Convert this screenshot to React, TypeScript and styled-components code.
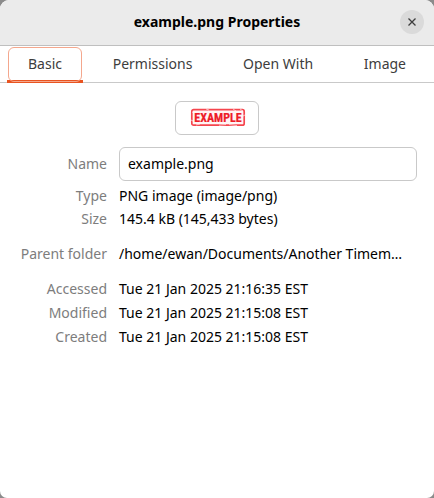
import React, { useState } from 'react';
import styled, { createGlobalStyle } from 'styled-components';

const GlobalStyle = createGlobalStyle`
  * { box-sizing: border-box; }
  body {
    margin: 0;
    background: #8b8b8b;
    font-family: 'Noto Sans', 'Open Sans', sans-serif;
    font-size: 14px;
    line-height: 20px;
    color: #000;
  }
  button, input { font: inherit; color: inherit; }
`;

const Window = styled.main`
  display: flex;
  flex-direction: column;
  min-height: 100vh;
  overflow: hidden;
  background: #fff;
  border-radius: 9px 9px 7px 7px;
`;

const TitleBar = styled.header`
  display: grid;
  grid-template-columns: 24px 1fr 24px;
  align-items: center;
  height: 46px;
  padding: 0 10px;
  padding-bottom: 1px;
  background: #ebebeb;
  border-bottom: 1px solid #bfbfbf;
`;

const Title = styled.h1`
  grid-column: 2;
  margin: 0;
  font-size: 14px;
  font-weight: 700;
  line-height: 20px;
  text-align: center;
`;

const CloseButton = styled.button`
  display: grid;
  place-items: center;
  width: 24px;
  height: 24px;
  padding: 0;
  border: 0;
  border-radius: 50%;
  background: #dadada;
  color: #3d3d3d;
`;

const TabBar = styled.div`
  display: flex;
  justify-content: space-between;
  height: 37px;
  padding: 0 7px;
  border-bottom: 1px solid #c9c9c9;
`;

const Tab = styled.button<{ $active: boolean }>`
  height: 37px;
  padding: 1px 0 0;
  border: 0;
  border-bottom: 3px solid ${(p) => (p.$active ? '#e95420' : 'transparent')};
  background: none;
  color: #3d3d3d;
  outline: none;
`;

const TabLabel = styled.span<{ $active: boolean }>`
  display: block;
  height: 35px;
  margin: 0 1px;
  padding: 6px 19px;
  border: 1px solid ${(p) => (p.$active ? '#f4a78d' : 'transparent')};
  border-radius: 6px;
`;

const Page = styled.section`
  display: flex;
  flex-direction: column;
  gap: 12px;
  padding: 18px 17px;
`;

const PreviewButton = styled.button`
  display: grid;
  place-items: center;
  align-self: center;
  width: 84px;
  height: 34px;
  padding: 0;
  border: 1px solid #c9c9c9;
  border-radius: 6px;
  background: #fff;
`;

const Fields = styled.div`
  display: grid;
  gap: 15px;
`;

const Group = styled.div<{ $gap: number }>`
  display: grid;
  gap: ${(p) => p.$gap}px;
`;

const Row = styled.div`
  display: grid;
  grid-template-columns: 90px minmax(0, 1fr);
  column-gap: 12px;
  align-items: center;
`;

const Label = styled.label`
  color: #7d7d7d;
  text-align: right;
  white-space: nowrap;
`;

const Value = styled.output`
  white-space: nowrap;
`;

const NameInput = styled.input`
  width: 100%;
  height: 34px;
  padding: 0 8px 2px;
  border: 1px solid #c9c9c9;
  border-radius: 6px;
  background: #fff;
  outline: none;
`;

const StampText = styled.text`
  font-family: 'Liberation Sans Narrow', 'Roboto Condensed', 'Roboto', sans-serif;
  font-size: 12px;
  font-weight: 700;
`;

const tabs = ['Basic', 'Permissions', 'Open With', 'Image'];

const groups = [
  { gap: 3, rows: [['Type', 'PNG image (image/png)'], ['Size', '145.4 kB (145,433 bytes)']] },
  { gap: 3, rows: [['Parent folder', '/home/ewan/Documents/Another Timem…']] },
  {
    gap: 4,
    rows: [
      ['Accessed', 'Tue 21 Jan 2025 21:16:35 EST'],
      ['Modified', 'Tue 21 Jan 2025 21:15:08 EST'],
      ['Created', 'Tue 21 Jan 2025 21:15:08 EST'],
    ],
  },
];

function Stamp() {
  return (
    <svg width="58" height="20" viewBox="0 0 58 20" aria-hidden="true">
      <rect x="3.8" y="1.6" width="52.4" height="15.6" rx="1.8" fill="#fff4f4" stroke="#f5454d" strokeWidth="1.7" />
      <StampText x="30" y="13.7" textAnchor="middle" fill="#ee1c27" stroke="#ee1c27" strokeWidth=".2">EXAMPLE</StampText>
      <path
        d="M3 12l2 1M8 17l4-1M18 1l3 1M31 17.2l7-.6M41 16.6l8 1M45 1l3 2M52 1l3 2M55 8l2-1M4 4l2 1"
        stroke="#fff"
        strokeOpacity=".6"
        fill="none"
      />
    </svg>
  );
}

function InfoRow({ label, value }: { label: string; value: string }) {
  const id = label.toLowerCase().replace(' ', '-');
  return (
    <Row>
      <Label htmlFor={id}>{label}</Label>
      <Value id={id}>{value}</Value>
    </Row>
  );
}

export default function App() {
  const [active, setActive] = useState('Basic');
  const [name, setName] = useState('example.png');

  return (
    <>
      <GlobalStyle />
      <Window>
        <TitleBar>
          <Title>example.png Properties</Title>
          <CloseButton type="button" aria-label="Close">
            <svg width="10" height="10" viewBox="0 0 10 10" aria-hidden="true">
              <path d="M1.5 1.5l7 7M8.5 1.5l-7 7" stroke="currentColor" strokeWidth="1.3" />
            </svg>
          </CloseButton>
        </TitleBar>
        <TabBar role="tablist">
          {tabs.map((tab) => (
            <Tab
              key={tab}
              type="button"
              role="tab"
              aria-selected={tab === active}
              $active={tab === active}
              onClick={() => setActive(tab)}
            >
              <TabLabel $active={tab === active}>{tab}</TabLabel>
            </Tab>
          ))}
        </TabBar>
        <Page role="tabpanel" aria-label={active}>
          <PreviewButton type="button" aria-label="Change icon">
            <Stamp />
          </PreviewButton>
          <Fields>
            <Group $gap={5}>
              <Row>
                <Label htmlFor="name">Name</Label>
                <NameInput id="name" value={name} onChange={(e) => setName(e.target.value)} />
              </Row>
              <Group $gap={groups[0].gap}>
                {groups[0].rows.map(([label, value]) => (
                  <InfoRow key={label} label={label} value={value} />
                ))}
              </Group>
            </Group>
            {groups.slice(1).map((group) => (
              <Group key={group.rows[0][0]} $gap={group.gap}>
                {group.rows.map(([label, value]) => (
                  <InfoRow key={label} label={label} value={value} />
                ))}
              </Group>
            ))}
          </Fields>
        </Page>
      </Window>
    </>
  );
}
